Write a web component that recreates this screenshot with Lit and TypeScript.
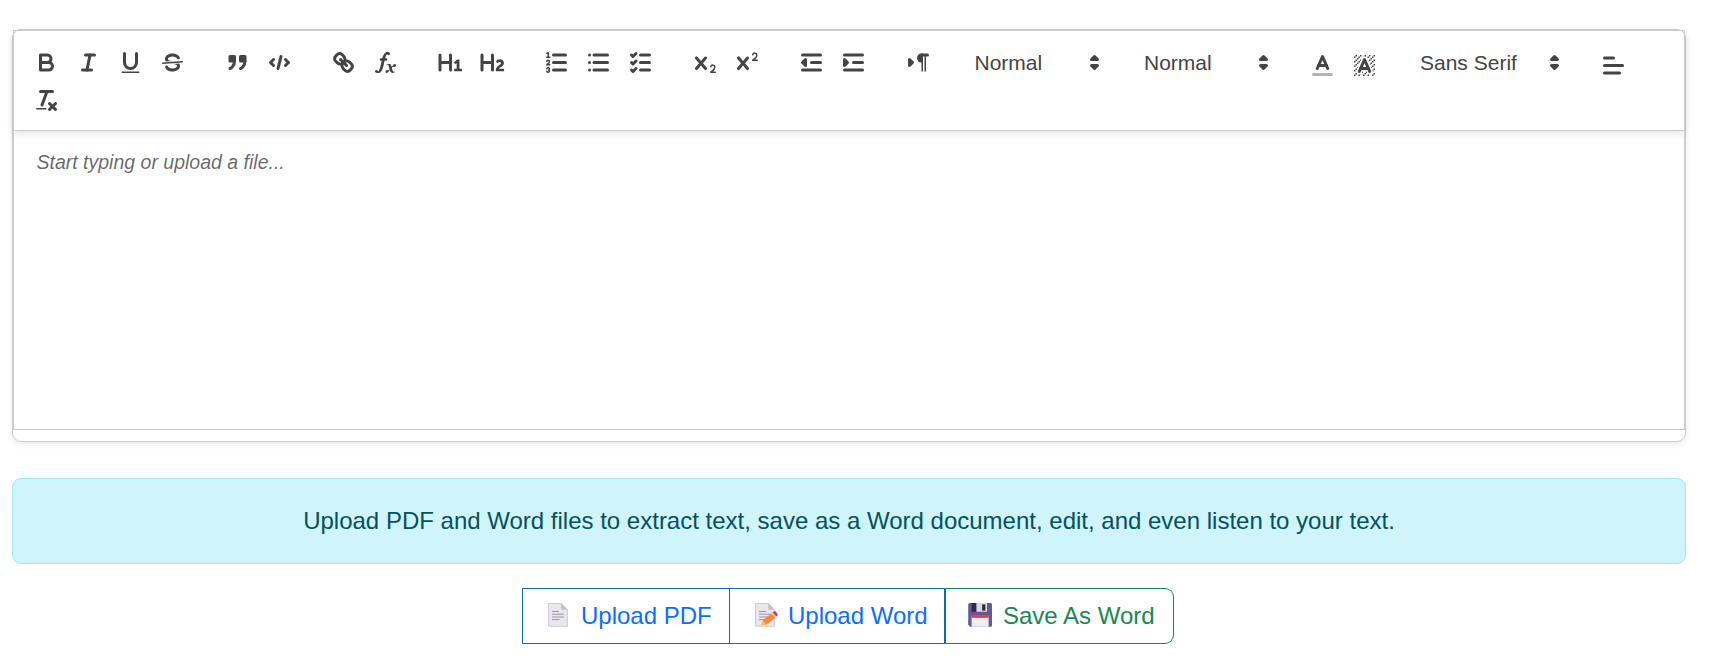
import { LitElement, html, css, svg } from "lit";
import { customElement } from "lit/decorators.js";

const ln = (x1: number, y1: number, x2: number, y2: number, cls = "s") =>
  svg`<line class=${cls} x1=${x1} y1=${y1} x2=${x2} y2=${y2}></line>`;
const st = (d: string, cls = "s") => svg`<path class=${cls} d=${d}></path>`;
const fl = (d: string) => svg`<path class="f" d=${d}></path>`;
const rc = (x: number, y: number, w: number, h: number, rx = 0, cls = "f") =>
  svg`<rect class=${cls} x=${x} y=${y} width=${w} height=${h} rx=${rx}></rect>`;

const CROSS =
  "M9.65,5.241a1,1,0,0,0-1.409.108L6,7.964,3.759,5.349A1,1,0,0,0,2.192,6.59178Q2.21541,6.6213,2.241,6.649L4.684,9.5,2.241,12.35A1,1,0,0,0,3.71,13.70722q0.02557-.02768.049-0.05722L6,11.036,8.241,13.65a1,1,0,1,0,1.567-1.24277Q9.78459,12.3777,9.759,12.35L7.316,9.5,9.759,6.651A1,1,0,0,0,9.65,5.241Z";

const HATCH_DOTS = [
  [4, 4], [2, 6], [3, 5], [4, 7], [2, 12], [2, 9], [2, 15], [3, 8], [12, 2], [11, 3], [2, 3], [6, 2],
  [3, 2], [5, 3], [9, 2], [15, 14], [13, 7], [15, 5], [14, 6], [15, 8], [14, 9], [14, 3], [15, 2],
  [12, 5], [13, 4], [9, 14], [8, 15], [5, 15], [11, 15], [14, 15], [15, 11],
];
const HATCH_EDGES =
  "M6,6.868V6H5V7H5.942ZM6.817,5H6V6H6.38ZM4,11.439V11H3V12H3.755ZM4.63,10H4V11H4.192Z" +
  "M10.832,4.2L11,4.582V4H10.708A1.948,1.948,0,0,1,10.832,4.2ZM7,4.582L7.168,4.2A1.929,1.929,0,0,1,7.292,4H7V4.582Z" +
  "M8,13H7.683l-0.351.8a1.933,1.933,0,0,1-.124.2H8V13ZM9,3H8V3.282A1.985,1.985,0,0,1,9,3Z" +
  "M13.447,10.174L13.808,11H14V10H13.37ZM3.775,14H3v1H4V14.314A1.97,1.97,0,0,1,3.775,14Z" +
  "M12,6.868V6H11.62ZM12.933,9H13V8H12.495ZM6,14.926V15H7V14.316A1.993,1.993,0,0,1,6,14.926Z" +
  "M10.668,13.8L10.317,13H10v1h0.792A1.947,1.947,0,0,1,10.668,13.8ZM14.332,12.2a1.99,1.99,0,0,1,.166.8H15V12H14.245Z";

const ICONS: Record<string, unknown> = {
  bold: [
    st("M5,4H9.5A2.5,2.5,0,0,1,12,6.5v0A2.5,2.5,0,0,1,9.5,9H5V4Z"),
    st("M5,9h5.5A2.5,2.5,0,0,1,13,11.5v0A2.5,2.5,0,0,1,10.5,14H5V9Z"),
  ],
  italic: [ln(7, 4, 13, 4), ln(5, 14, 11, 14), ln(8, 14, 10, 4)],
  underline: [st("M5,3V9a4.012,4.012,0,0,0,4,4H9a4.012,4.012,0,0,0,4-4V3"), rc(3, 15, 12, 1, 0.5)],
  strike: [
    ln(15.5, 8.5, 2.5, 9.5, "s thin"),
    fl("M9.007,8C6.542,7.791,6,7.519,6,6.5,6,5.792,7.283,5,9,5c1.571,0,2.765.679,2.969,1.309a1,1,0,0,0,1.9-.617C13.356,4.106,11.354,3,9,3,6.2,3,4,4.538,4,6.5a3.2,3.2,0,0,0,.5,1.843Z"),
    fl("M8.984,10C11.457,10.208,12,10.479,12,11.5c0,0.708-1.283,1.5-3,1.5-1.571,0-2.765-.679-2.969-1.309a1,1,0,1,0-1.9.617C4.644,13.894,6.646,15,9,15c2.8,0,5-1.538,5-3.5a3.2,3.2,0,0,0-.5-1.843Z"),
  ],
  quote: [
    rc(4, 5, 3, 3, 0, "sf"),
    rc(11, 5, 3, 3, 0, "sf"),
    st("M7,8c0,4.031-3,5-3,5", "sf"),
    st("M14,8c0,4.031-3,5-3,5", "sf"),
  ],
  code: [st("M5,7L3,9L5,11"), st("M13,7L15,9L13,11"), ln(10, 5, 8, 13)],
  link: [
    ln(7, 7, 11, 11),
    st("M8.9,4.577a3.476,3.476,0,0,1,.36,4.679A3.476,3.476,0,0,1,4.577,8.9C3.185,7.5,2.035,6.4,4.217,4.217S7.5,3.185,8.9,4.577Z"),
    st("M13.423,9.1a3.476,3.476,0,0,0-4.679-.36,3.476,3.476,0,0,0,.36,4.679c1.392,1.392,2.5,2.542,4.679.36S14.815,10.5,13.423,9.1Z"),
  ],
  formula: [
    fl("M11.759,2.482a2.561,2.561,0,0,0-3.53.607A7.656,7.656,0,0,0,6.8,6.2C6.109,9.188,5.275,14.677,4.15,14.927a1.545,1.545,0,0,0-1.3-.933A0.922,0.922,0,0,0,2,15.036S1.954,16,4.119,16s3.091-2.691,3.7-5.553c0.177-.826.36-1.726,0.554-2.6L8.775,6.2c0.381-1.421.807-2.521,1.306-2.676a1.014,1.014,0,0,0,1.02.56A0.966,0.966,0,0,0,11.759,2.482Z"),
    rc(5.15, 6.2, 5, 1.6, 0.8),
    fl("M13.663,12.027a1.662,1.662,0,0,1,.266-0.276q0.193,0.069.456,0.138a2.1,2.1,0,0,0,.535.069,1.075,1.075,0,0,0,.767-0.3,1.044,1.044,0,0,0,.314-0.8,0.84,0.84,0,0,0-.238-0.619,0.8,0.8,0,0,0-.594-0.239,1.154,1.154,0,0,0-.781.3,4.607,4.607,0,0,0-.781,1q-0.091.15-.218,0.346l-0.246.38c-0.068-.288-0.137-0.582-0.212-0.885-0.459-1.847-2.494-.984-2.941-0.8-0.482.2-.353,0.647-0.094,0.529a0.869,0.869,0,0,1,1.281.585c0.217,0.751.377,1.436,0.527,2.038a5.688,5.688,0,0,1-.362.467,2.69,2.69,0,0,1-.264.271q-0.221-.08-0.471-0.147a2.029,2.029,0,0,0-.522-0.066,1.079,1.079,0,0,0-.768.3A1.058,1.058,0,0,0,9,15.131a0.82,0.82,0,0,0,.832.852,1.134,1.134,0,0,0,.787-0.3,5.11,5.11,0,0,0,.776-0.993q0.141-.219.215-0.34c0.046-.076.122-0.194,0.223-0.346a2.786,2.786,0,0,0,.918,1.726,2.582,2.582,0,0,0,2.376-.185c0.317-.181.212-0.565,0-0.494A0.807,0.807,0,0,1,14.176,15a5.159,5.159,0,0,1-.913-2.446l0,0Q13.487,12.24,13.663,12.027Z"),
  ],
  h1: fl("M10,4V14a1,1,0,0,1-2,0V10H3v4a1,1,0,0,1-2,0V4A1,1,0,0,1,3,4V8H8V4a1,1,0,0,1,2,0Zm6.06787,9.209H14.98975V7.59863a.54085.54085,0,0,0-.605-.60547h-.62744a1.01119,1.01119,0,0,0-.748.29688L11.645,8.56641a.5435.5435,0,0,0-.022.8584l.28613.30762a.53861.53861,0,0,0,.84717.0332l.09912-.08789a1.2137,1.2137,0,0,0,.2417-.35254h.02246s-.01123.30859-.01123.60547V13.209H12.041a.54085.54085,0,0,0-.605.60547v.43945a.54085.54085,0,0,0,.605.60547h4.02686a.54085.54085,0,0,0,.605-.60547v-.43945A.54085.54085,0,0,0,16.06787,13.209Z"),
  h2: fl("M16.73975,13.81445v.43945a.54085.54085,0,0,1-.605.60547H11.855a.58392.58392,0,0,1-.64893-.60547V14.0127c0-2.90527,3.39941-3.42187,3.39941-4.55469a.77675.77675,0,0,0-.84717-.78125,1.17684,1.17684,0,0,0-.83594.38477c-.2749.26367-.561.374-.85791.13184l-.4292-.34082c-.30811-.24219-.38525-.51758-.1543-.81445a2.97155,2.97155,0,0,1,2.45361-1.17676,2.45393,2.45393,0,0,1,2.68408,2.40918c0,2.45312-3.1792,2.92676-3.27832,3.93848h2.79443A.54085.54085,0,0,1,16.73975,13.81445ZM9,3A.99974.99974,0,0,0,8,4V8H3V4A1,1,0,0,0,1,4V14a1,1,0,0,0,2,0V10H8v4a1,1,0,0,0,2,0V4A.99974.99974,0,0,0,9,3Z"),
  ordered: [
    ln(7, 4, 15, 4), ln(7, 9, 15, 9), ln(7, 14, 15, 14), ln(2.5, 5.5, 4.5, 5.5, "s thin"),
    fl("M3.5,6A0.5,0.5,0,0,1,3,5.5V3.085l-0.276.138A0.5,0.5,0,0,1,2.053,3c-0.124-.247-0.023-0.324.224-0.447l1-.5A0.5,0.5,0,0,1,4,2.5v3A0.5,0.5,0,0,1,3.5,6Z"),
    st("M4.5,10.5h-2c0-.234,1.85-1.076,1.85-2.234A0.959,0.959,0,0,0,2.5,8.156", "s thin"),
    st("M2.5,14.846a0.959,0.959,0,0,0,1.85-.109A0.7,0.7,0,0,0,3.75,14a0.688,0.688,0,0,0,.6-0.736,0.959,0.959,0,0,0-1.85-.109", "s thin"),
  ],
  bullet: [
    ln(6, 4, 15, 4), ln(6, 9, 15, 9), ln(6, 14, 15, 14),
    ln(3, 4, 3, 4), ln(3, 9, 3, 9), ln(3, 14, 3, 14),
  ],
  check: [
    ln(9, 4, 15, 4), ln(9, 9, 15, 9), ln(9, 14, 15, 14),
    st("M3,4L4,5L6,3"), st("M3,9L4,10L6,8"), st("M3,14L4,15L6,13"),
  ],
  sub: [
    fl("M15.5,15H13.861a3.858,3.858,0,0,0,1.914-2.975,1.8,1.8,0,0,0-1.6-1.751A1.921,1.921,0,0,0,12.021,11.7a0.50013,0.50013,0,1,0,.957.291h0a0.914,0.914,0,0,1,1.053-.725,0.81,0.81,0,0,1,.744.762c0,1.076-1.16971,1.86982-1.93971,2.43082A1.45639,1.45639,0,0,0,12,15.5a0.5,0.5,0,0,0,.5.5h3A0.5,0.5,0,0,0,15.5,15Z"),
    fl(CROSS),
  ],
  sup: [
    fl("M15.5,7H13.861a4.015,4.015,0,0,0,1.914-2.975,1.8,1.8,0,0,0-1.6-1.751A1.922,1.922,0,0,0,12.021,3.7a0.5,0.5,0,1,0,.957.291,0.917,0.917,0,0,1,1.053-.725,0.81,0.81,0,0,1,.744.762c0,1.077-1.164,1.925-1.934,2.486A1.423,1.423,0,0,0,12,7.5a0.5,0.5,0,0,0,.5.5h3A0.5,0.5,0,0,0,15.5,7Z"),
    fl(CROSS),
  ],
  outdent: [ln(3, 14, 15, 14), ln(3, 4, 15, 4), ln(9, 9, 15, 9), st("M5,7V11L3,9Z", "sf")],
  indent: [ln(3, 14, 15, 14), ln(3, 4, 15, 4), ln(9, 9, 15, 9), st("M3,7V11L5,9Z", "sf")],
  direction: [
    st("M3,11L5,9L3,7Z", "sf"), ln(15, 4, 11, 4), fl("M11,3a3,3,0,0,0,0,6h1V3H11Z"),
    rc(11, 4, 1, 11), rc(13, 4, 1, 11),
  ],
  color: [ln(3, 15, 15, 15, "s faint"), st("M5.5,11L9,3L12.5,11"), ln(11.63, 9, 6.38, 9)],
  background: [
    HATCH_DOTS.map(([x, y]) => rc(x, y, 1, 1)), fl(HATCH_EDGES),
    st("M5.5,13L9,5L12.5,13"), ln(11.63, 11, 6.38, 11),
  ],
  align: [ln(3, 9, 15, 9), ln(3, 14, 13, 14), ln(3, 4, 9, 4)],
  clean: [
    ln(5, 3, 13, 3), ln(6, 12, 9.35, 3), ln(11, 11, 15, 15), ln(15, 11, 11, 15), rc(2, 14, 7, 1, 0.5),
  ],
  arrows: [st("M7,11L9,13L11,11Z", "sf"), st("M7,7L9,5L11,7Z", "sf")],
};

const icon = (name: string) => html`<svg class="icon" viewBox="0 0 18 18">${ICONS[name]}</svg>`;
const button = (name: string) => html`<button class="tool" aria-label=${name}>${icon(name)}</button>`;
const swatch = (name: string) => html`<button class="tool low" aria-label=${name}>${icon(name)}</button>`;
const group = (...names: string[]) => html`<div class="group">${names.map(button)}</div>`;
const picker = (label: string, cls = "") =>
  html`<div class="group"><div class="picker ${cls}"><span class="label">${label}</span>${icon("arrows")}</div></div>`;

const sheet = svg`
  <path d="M3.6 1.5H16.2L22.4 7.7V24.2H3.6Z" fill="#e9e6ef" stroke="#cfcbd2" stroke-width="1"></path>
  <path d="M16.2 1.2L22.8 7.8H16.2Z" fill="#c3bfc9"></path>
  <path d="M7 9.5H14M7 12.2H19M7 15H19M7 17.6H14.5" stroke="#9c97a8" stroke-width="1" fill="none"></path>`;
const pageIcon = html`<svg class="emoji" viewBox="0 0 26 26">${sheet}</svg>`;
const memoIcon = html`<svg class="emoji" viewBox="0 0 26 26">${sheet}
  <path d="M9 23.6L10.6 18.4L14.4 22.6Z" fill="#f9c23c"></path>
  <path d="M10.6 18.2L19.6 11.2L23.3 15.8L14.3 22.8Z" fill="#ff8838"></path>
  <path d="M19.6 11.2L21 10.1L24.7 14.7L23.3 15.8Z" fill="#d3d3d3"></path>
  <path d="M20.7 10.3L22.2 9.2Q23 8.8 23.7 9.6L25.6 12.2Q26 13 25.3 13.7L24.1 14.6Z" fill="#e8305c"></path>
</svg>`;
const diskIcon = html`<svg class="emoji" viewBox="0 0 26 26">
  <path d="M3 1H23.5Q25 1 25 2.5V23.3Q25 24.8 23.5 24.8H3.2L1.2 22.8V2.6Q1.2 1 3 1Z" fill="#635994"></path>
  <path d="M4.6 1H20V9.8H4.6Z" fill="#34264f"></path>
  <path d="M9.4 1H20V9.8H9.4Z" fill="#dcd8e2"></path>
  <path d="M15.2 2.4H18.3V8.6H15.2Z" fill="#2b2238"></path>
  <path d="M4.6 13.8H21.6V24.8H4.6Z" fill="#efeff3"></path>
  <path d="M4.6 13.4H21.6V15.8H4.6Z" fill="#f0323c"></path>
</svg>`;

@customElement("app-root")
export class AppRoot extends LitElement {
  static styles = css`
    :host {
      display: block;
      box-sizing: border-box;
      height: 666px;
      padding: 29px 36px 0 12px;
      background: #fff;
      font-family: "Liberation Sans", Arial, sans-serif;
    }
    * { box-sizing: border-box; }
    .editor {
      height: 413px;
      border: 1px solid #ccc;
      border-radius: 9px;
      box-shadow: 0 3px 6px rgba(0, 0, 0, 0.08);
    }
    .toolbar {
      display: flex;
      flex-wrap: wrap;
      align-content: flex-start;
      height: 101px;
      padding: 13px 11.5px 0;
      border: 1px solid #ccc;
      box-shadow: 0 3px 7px rgba(0, 0, 0, 0.1);
    }
    .group {
      display: flex;
      height: 38.5px;
      margin-right: 22.5px;
    }
    .tool {
      width: 42px;
      height: 36px;
      padding: 4.5px 7.5px;
      border: 0;
      background: none;
    }
    .low { padding: 7.5px 7px 1.5px 8px; }
    .icon {
      display: block;
      width: 27px;
      height: 27px;
      flex: none;
      overflow: visible;
    }
    .s { fill: none; stroke: #444; stroke-width: 2; stroke-linecap: round; stroke-linejoin: round; }
    .sf { fill: #444; stroke: #444; stroke-width: 2; stroke-linecap: round; stroke-linejoin: round; }
    .thin { stroke-width: 1; }
    .faint { opacity: 0.4; }
    .f { fill: #444; }
    .picker {
      display: flex;
      align-items: center;
      justify-content: space-between;
      width: 147px;
      height: 36px;
      padding: 0 1px 0 13px;
      color: #444;
      font-size: 21px;
    }
    .wide { width: 162px; }
    .label { padding-top: 2px; }
    .content {
      height: 299px;
      padding: 18px 22.5px;
      border: 1px solid #ccc;
      border-top: 0;
      color: rgba(0, 0, 0, 0.6);
      font-size: 19.5px;
      font-style: italic;
      line-height: 27.7px;
    }
    .notice {
      display: flex;
      align-items: center;
      justify-content: center;
      height: 86px;
      margin-top: 36px;
      border: 1px solid #9eeaf9;
      border-radius: 9px;
      background: #cff4fc;
      color: #055160;
      font-size: 24px;
    }
    .actions {
      display: flex;
      justify-content: center;
      margin-top: 24px;
      padding-right: 2px;
    }
    .action {
      display: flex;
      align-items: center;
      height: 56px;
      padding: 0 18px 0 22px;
      border: 1px solid #0f6ab8;
      background: #fff;
      color: #0d6efd;
      font: 24px "Liberation Sans", Arial, sans-serif;
      white-space: nowrap;
    }
    .pdf { width: 208px; }
    .word { width: 216px; margin-left: -1px; }
    .save {
      width: 229px;
      padding-left: 21px;
      border-color: #198754;
      border-left-color: #0f6a8c;
      border-radius: 0 9px 9px 0;
      color: #198754;
    }
    .emoji {
      display: block;
      width: 26px;
      height: 26px;
      margin: -2px 10px 0 0;
      flex: none;
    }
  `;

  render() {
    return html`
      <section class="editor">
        <div class="toolbar">
          ${group("bold", "italic", "underline", "strike")} ${group("quote", "code")}
          ${group("link", "formula")} ${group("h1", "h2")} ${group("ordered", "bullet", "check")}
          ${group("sub", "sup")} ${group("outdent", "indent")} ${group("direction")}
          ${picker("Normal")} ${picker("Normal")}
          <div class="group">${swatch("color")}${swatch("background")}</div>
          ${picker("Sans Serif", "wide")}
          <div class="group">${swatch("align")}</div>
          ${group("clean")}
        </div>
        <div class="content">Start typing or upload a file...</div>
      </section>
      <div class="notice">
        Upload PDF and Word files to extract text, save as a Word document, edit, and even listen to your text.
      </div>
      <div class="actions">
        <button class="action pdf">${pageIcon}<span>Upload PDF</span></button>
        <button class="action word">${memoIcon}<span>Upload Word</span></button>
        <button class="action save">${diskIcon}<span>Save As Word</span></button>
      </div>
    `;
  }
}
